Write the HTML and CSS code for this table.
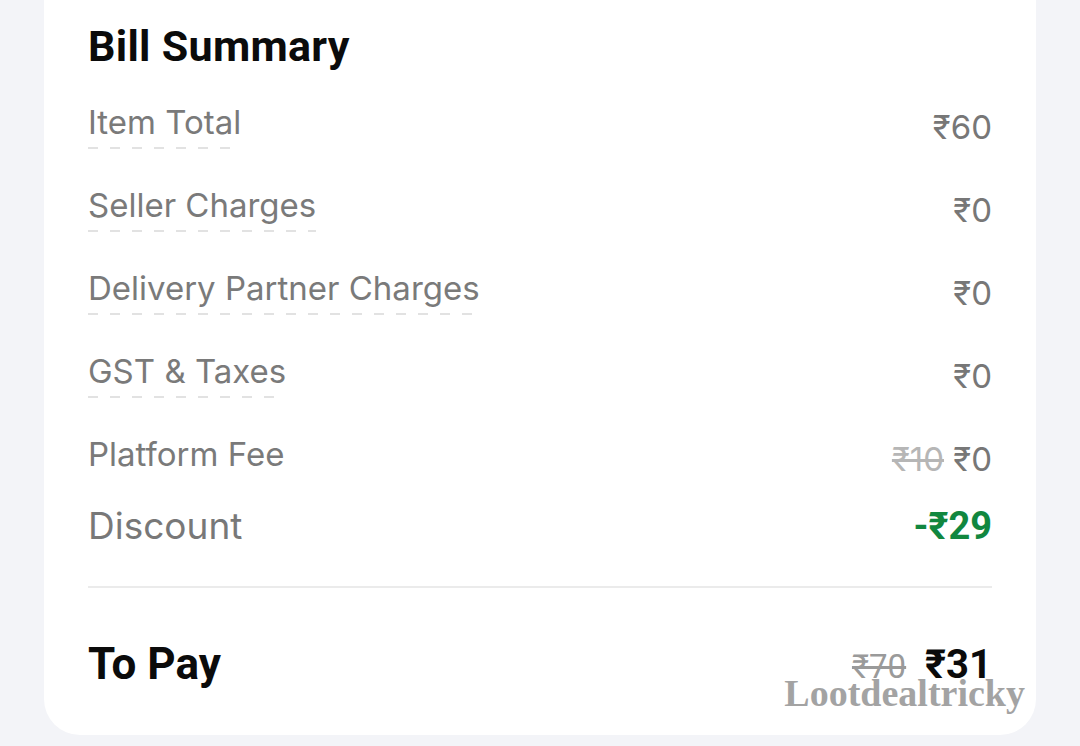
FILE: index.html
```html
<!DOCTYPE html>
<html lang="en">
<head>
    <meta charset="UTF-8">
    <meta name="viewport" content="width=device-width, initial-scale=1.0">
    <title>Bill Summary</title>
    <link rel="stylesheet" href="styles.css">
</head>
<body>
    <div class="card">
        <h1 class="title">Bill Summary</h1>

        <div class="rows">
            <div class="row">
                <span class="label dashed">Item Total</span>
                <span class="value">₹60</span>
            </div>
            <div class="row">
                <span class="label dashed">Seller Charges</span>
                <span class="value">₹0</span>
            </div>
            <div class="row">
                <span class="label dashed">Delivery Partner Charges</span>
                <span class="value">₹0</span>
            </div>
            <div class="row">
                <span class="label dashed">GST &amp; Taxes</span>
                <span class="value">₹0</span>
            </div>
            <div class="row">
                <span class="label">Platform Fee</span>
                <span class="value"><s class="old">₹10</s> ₹0</span>
            </div>
        </div>

        <!-- Discount -->
        <div class="discount">
            <span class="discount-label">Discount</span>
            <span class="discount-value">-₹29</span>
        </div>

        <hr class="divider">

        <div class="total">
            <span class="total-label">To Pay</span>
            <span class="total-value"><s class="total-old">₹70</s> ₹31</span>
        </div>

        <div class="watermark">Lootdealtricky</div>
    </div>
</body>
</html>
```

FILE: styles.css
```css
/* General reset */
body {
    margin: 0;
    padding: 0;
    background-color: #f3f4f8;
    font-family: Inter, 'Noto Sans', sans-serif;
}

/* Card */
.card {
    position: relative;
    margin: 0 44px;
    padding: 21px 44px 46px;
    background-color: #ffffff;
    border-radius: 0 0 36px 36px;
}

.title {
    margin: 0;
    font-family: Roboto, 'Noto Sans', sans-serif;
    font-size: 43px;
    font-weight: 700;
    line-height: 50px;
    letter-spacing: 0.3px;
    color: #0b0b0b;
}

/* Charge rows */
.rows {
    margin-top: 13px;
}

.row {
    display: flex;
    justify-content: space-between;
    align-items: center;
    height: 83px;
}

.label {
    font-size: 33px;
    line-height: 38px;
    color: #7a7a7a;
    padding-bottom: 6px;
    border-bottom: 2px solid transparent;
}

.label.dashed {
    border-bottom: none;
    background-image: linear-gradient(to right, #e2e2e2 10px, transparent 10px);
    background-size: 22px 2px;
    background-repeat: repeat-x;
    background-position: left bottom;
    padding-bottom: 8px;
}

.value {
    font-size: 33px;
    line-height: 38px;
    color: #777777;
    padding-top: 3px;
}

.old {
    color: #b6b6b6;
}

/* Discount */
.discount {
    display: flex;
    justify-content: space-between;
    align-items: center;
    margin-top: 5px;
    height: 44px;
}

.discount-label {
    font-size: 37px;
    line-height: 44px;
    color: #787878;
}

.discount-value {
    font-family: Roboto, 'Noto Sans', sans-serif;
    font-size: 38px;
    font-weight: 700;
    line-height: 44px;
    color: #11873f;
}

.divider {
    margin: 38px 0 0;
    border: none;
    height: 2px;
    background-color: #ebebeb;
}

/* To Pay */
.total {
    display: flex;
    justify-content: space-between;
    align-items: center;
    margin-top: 51px;
    height: 50px;
    font-family: Roboto, 'Noto Sans', sans-serif;
}

.total-label {
    font-size: 44px;
    font-weight: 700;
    color: #0b0b0b;
}

.total-value {
    font-size: 40px;
    font-weight: 700;
    color: #0b0b0b;
}

.total-old {
    font-size: 33px;
    font-weight: 400;
    color: #9a9a9a;
    margin-right: 9px;
}

.watermark {
    position: absolute;
    right: 11px;
    bottom: 20px;
    font-family: 'Liberation Serif', serif;
    font-size: 38px;
    font-weight: 700;
    color: #a3a3a3;
}
```
